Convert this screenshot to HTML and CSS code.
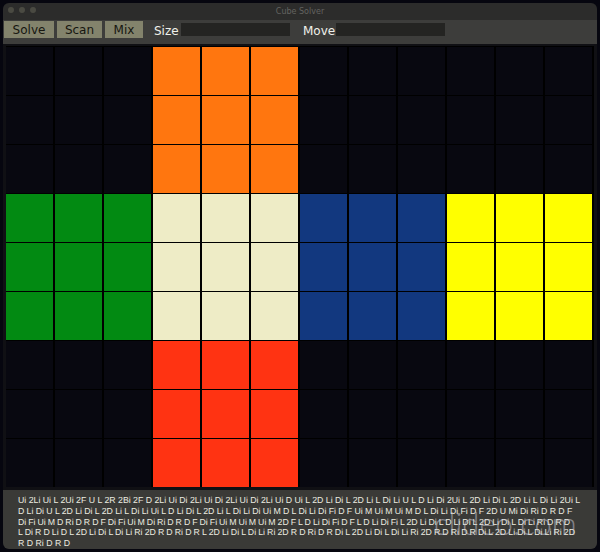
FILE: index.html
```html
<!DOCTYPE html>
<html lang="en">
<head>
    <meta charset="UTF-8">
    <meta name="viewport" content="width=device-width, initial-scale=1.0">
    <title>Cube Solver</title>
    <link rel="stylesheet" href="styles.css">
</head>
<body>
    <div class="window">
        <div class="titlebar">
            <div class="lights"><span></span><span></span><span></span></div>
            <div class="title">Cube Solver</div>
        </div>
        <div class="toolbar">
            <button class="btn btn-solve">Solve</button>
            <button class="btn btn-scan">Scan</button>
            <button class="btn btn-mix">Mix</button>
            <label class="size-label">Size</label>
            <div class="field"></div>
            <label class="move-label">Move</label>
            <div class="field"></div>
        </div>

        <!-- Unfolded cube, 12 x 9 cells -->
        <div class="cube" id="cube"></div>

        <div class="log">
            <p>Ui 2Li Ui L 2Ui 2F U L 2R 2Bi 2F D 2Li Ui Di 2Li Ui Di 2Li Ui Di 2Li Ui D Ui L 2D Li Di L 2D Li L Di Li U L D Li Di 2Ui L 2D Li Di L 2D Li L Di Li 2Ui L</p>
            <p>D Li Di U L 2D Li Di L 2D Li L Di Li Ui L D Li Di L 2D Li L Di Li Di Ui M D L Di Li Di Fi D F Ui M Ui M Ui M D L Di Li Di Fi D F 2D U Mi Di Ri D R D F</p>
            <p>Di Fi Ui M D Ri D R D F Di Fi Ui M Di Ri D R D F Di Fi Ui M Ui M Ui M 2D F L D Li Di Fi D F L D Li Di Fi L 2D Li Di L D Li Di L 2D Li Di L Di Li Ri D R D</p>
            <p>L Di R D Li D L 2D Li Di L Di Li Ri 2D R D Ri D R L 2D Li Di L Di Li Ri 2D R D Ri D R Di L 2D Li Di L Di Li Ri 2D R D Ri D R Di L 2D Li Di L Di Li Ri 2D</p>
            <p>R D Ri D R D</p>
        </div>
    </div>
    <div class="watermark">clideo.com</div>

    <script>
        // Which face colour each cell has, one string per row
        const rows = [
            '...ooo......',
            '...ooo......',
            '...ooo......',
            'gggwwwbbbyyy',
            'gggwwwbbbyyy',
            'gggwwwbbbyyy',
            '...rrr......',
            '...rrr......',
            '...rrr......'
        ];

        const cube = document.getElementById('cube');
        rows.forEach(row => {
            row.split('').forEach(c => {
                const cell = document.createElement('div');
                cell.className = 'cell cell-' + (c === '.' ? 'empty' : c);
                cube.appendChild(cell);
            });
        });
    </script>
</body>
</html>
```

FILE: styles.css
```css
html, body {
    height: 100%;
}
body {
    margin: 0;
    padding: 3px 3px 0;
    box-sizing: border-box;
    background-color: #06060f;
    font-family: "DejaVu Sans", sans-serif;
    overflow: hidden;
    position: relative;
}
.window {
    height: 546px;
    background-color: #101014;
    border-radius: 6px;
    display: flex;
    flex-direction: column;
}
.titlebar {
    height: 17px;
    flex: none;
    display: flex;
    align-items: center;
    justify-content: center;
    background-color: #2c2c2b;
    border-radius: 6px 6px 0 0;
    position: relative;
}
.lights {
    position: absolute;
    left: 5px;
    top: 4px;
    display: flex;
    gap: 5px;
}
.lights span {
    width: 6px;
    height: 6px;
    border-radius: 50%;
    background-color: #4a4a42;
}
.title {
    font-size: 8px;
    color: #636360;
}
.toolbar {
    height: 23px;
    flex: none;
    display: flex;
    align-items: flex-start;
    padding: 1px 0 0 1px;
    background-color: #3d3d3b;
}
.btn {
    height: 17px;
    box-sizing: border-box;
    border: none;
    padding: 2px 0 0;
    margin: 0;
    background-color: #83836c;
    color: #161610;
    font-family: inherit;
    font-size: 12px;
    line-height: 15px;
}
.btn-solve {
    width: 50px;
}
.btn-scan {
    width: 45px;
    margin-left: 3px;
}
.btn-mix {
    width: 38px;
    margin-left: 3px;
}
.size-label, .move-label {
    color: #f0f0ea;
    font-size: 12px;
    line-height: 20px;
}
.size-label {
    margin-left: 11px;
    width: 27px;
}
.move-label {
    margin-left: 13px;
    width: 33px;
}
.field {
    width: 109px;
    height: 13px;
    margin-top: 2px;
    background-color: #242422;
}
.cube {
    flex: none;
    margin: 2px 0 0 3px;
    width: 588px;
    height: 441px;
    display: grid;
    grid-template-columns: repeat(12, 49px);
    grid-template-rows: repeat(9, 49px);
    background-color: #06060f;
}
.cell {
    box-sizing: border-box;
    border-right: 2px solid #000;
    border-top: 1px solid #000;
}
.cell-empty {
    background-color: #080810;
}
.cell-o {
    background-color: #ff760f;
}
.cell-g {
    background-color: #028a12;
}
.cell-w {
    background-color: #eeecc6;
}
.cell-b {
    background-color: #12387f;
}
.cell-y {
    background-color: #ffff00;
}
.cell-r {
    background-color: #ff3312;
}
.log {
    flex: 1;
    margin: 3px 0 0 0;
    padding: 5px 0 0 15px;
    background-color: #3a3a37;
    border-radius: 0 0 6px 6px;
    color: #ecece0;
    font-family: "Liberation Sans", sans-serif;
    font-size: 8.75px;
    line-height: 10.8px;
    text-rendering: geometricPrecision;
    overflow: hidden;
}
.log p {
    margin: 0;
    white-space: nowrap;
}
.log p:nth-child(2) {
    word-spacing: -0.14px;
}
.log p:nth-child(3) {
    word-spacing: -0.45px;
}
.log p:nth-child(4) {
    word-spacing: -0.33px;
}
.watermark {
    position: absolute;
    left: 434px;
    top: 504px;
    font-family: Lato, sans-serif;
    font-weight: 300;
    font-size: 31px;
    color: rgba(205, 205, 220, 0.5);
}
```
